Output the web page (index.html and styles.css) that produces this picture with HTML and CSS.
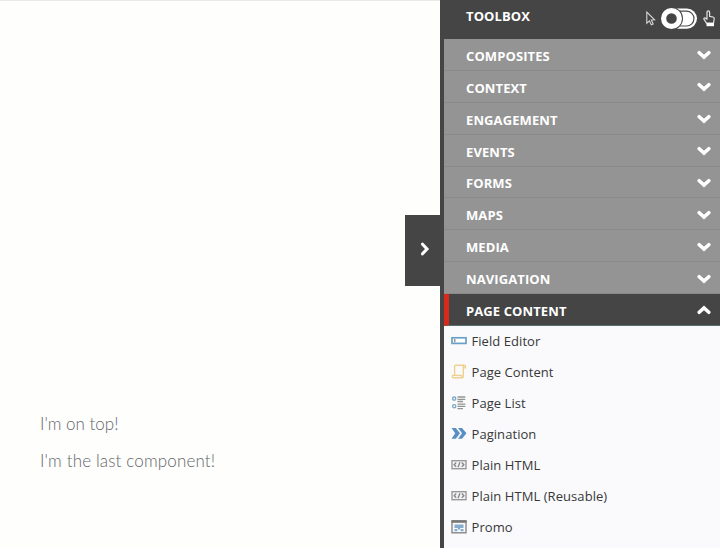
FILE: index.html
```
<!DOCTYPE html>
<html lang="en">
<head>
<meta charset="utf-8">
<title>Toolbox</title>
<link rel="stylesheet" href="styles.css">
</head>
<body>
<svg class="defs" width="0" height="0">
  <symbol id="chevron" viewBox="0 0 14 10"><path d="M2.2 2.7 7 7.1 11.8 2.7" fill="none" stroke="#fff" stroke-width="3.5" stroke-linecap="round" stroke-linejoin="miter"/></symbol>
  <symbol id="code" viewBox="0 0 16 16"><rect x="1" y="3.7" width="14" height="8" fill="#f4f4f4" stroke="#999" stroke-width="1.4"/><path d="M5.2 5.6 3.2 7.7l2 2.1M10.8 5.6l2 2.1-2 2.1M8.9 5.3 7.1 10.2" fill="none" stroke="#888" stroke-width="1.4"/></symbol>
</svg>
<main class="page">
  <p>I'm on top!</p>
  <p class="last">I'm the last component!</p>
  <button class="handle" aria-label="Toggle"><svg width="10" height="14" viewBox="0 0 10 14"><path d="M2.5 2.2 7 7 2.5 11.8" fill="none" stroke="#fff" stroke-width="3.1" stroke-linecap="round"/></svg></button>
</main>
<aside class="toolbox">
  <header class="head">
    <h1>TOOLBOX</h1>
    <svg class="mode" width="72" height="24" viewBox="645 6 72 24">
      <path d="M646.8 12v11.2l2.6-2.4 1.9 4 1.9-.9-1.9-3.9 3.3-.2z" fill="#454545" stroke="#d6d6d6" stroke-width="1.1"/>
      <rect x="662" y="8.4" width="35" height="20.4" rx="10.2" fill="#fff"/>
      <path d="M680 11.2h6.6a7.4 7.4 0 0 1 0 14.8H680" fill="#fff" stroke="#4b4b4b" stroke-width="1.2"/>
      <circle cx="671.5" cy="18.5" r="11.5" fill="#454545"/>
      <circle cx="671.5" cy="18.5" r="7.9" fill="#454545" stroke="#fff" stroke-width="5.2"/>
      <path d="M706.5 23.2 703.9 19.2q-.3-1.6 1.3-1.3l1.8 1.3V12.3q.1-1.4 1.3-1.4t1.3 1.4v4l3.4.7q1.5.5 1.2 2l-.7 4.2z" fill="#454545" stroke="#e4e4e4" stroke-width="1.2" stroke-linejoin="round"/>
      <rect x="706.5" y="23" width="7.5" height="3.2" fill="#fff"/>
    </svg>
  </header>
  <nav>
    <div class="group">COMPOSITES<svg><use href="#chevron"/></svg></div>
    <div class="group">CONTEXT<svg><use href="#chevron"/></svg></div>
    <div class="group">ENGAGEMENT<svg><use href="#chevron"/></svg></div>
    <div class="group">EVENTS<svg><use href="#chevron"/></svg></div>
    <div class="group">FORMS<svg><use href="#chevron"/></svg></div>
    <div class="group">MAPS<svg><use href="#chevron"/></svg></div>
    <div class="group">MEDIA<svg><use href="#chevron"/></svg></div>
    <div class="group">NAVIGATION<svg><use href="#chevron"/></svg></div>
    <div class="group open">PAGE CONTENT<svg><use href="#chevron"/></svg></div>
  </nav>
  <ul class="items">
    <li><svg viewBox="0 0 16 16"><rect x="1" y="4.8" width="14" height="5.6" fill="#fff" stroke="#6a9fc6" stroke-width="1.7"/><path d="M3.8 6v3.3" stroke="#888" stroke-width="1.3"/></svg>Field Editor</li>
    <li><svg viewBox="0 0 16 16"><path d="M3.6 11.5V2.2q0-1 1-1h8.6q1.3 0 1.3 1.3v1.3h-2.2M12.3 2v9.8M1.2 11.4h9.2v1.3q0 1.1 1 1.1h-8.600q-1.600 0-1.600-2.400M11.400 13.800q1 0 1-2" fill="none" stroke="#efd08d" stroke-width="1.4"/></svg>Page Content</li>
    <li><svg viewBox="0 0 16 16"><g fill="none" stroke="#7fa9c7" stroke-width="1.4"><circle cx="3.2" cy="3.6" r="1.6"/><circle cx="3.2" cy="11.2" r="1.6"/></g><path d="M6.500 2h7.800M6.500 4.300h7.800M6.500 6.500h5.500M6.500 9.200h7.800M6.500 11.400h7.800M6.500 13.600h5.500" stroke="#949494" stroke-width="1.300"/></svg>Page List</li>
    <li><svg viewBox="0 0 16 16"><path d="M.5 2h4.3L9 7.3l-4.2 5.500H.5L4.200 7.300zM7 2h4l4.500 5.300L11 12.800H7l4-5.500z" fill="#5b8fc3"/></svg>Pagination</li>
    <li><svg><use href="#code"/></svg>Plain HTML</li>
    <li><svg><use href="#code"/></svg>Plain HTML (Reusable)</li>
    <li><svg viewBox="0 0 16 16"><rect x="1" y="2" width="14" height="11.800" fill="#f7f9fb" stroke="#888" stroke-width="1.400"/><path d="M.5 2.500h15" stroke="#777" stroke-width="2.600"/><path d="M3.500 5.500h9v3.400h-9zM3.500 10h2.800v2.300H3.500zM9.700 10h2.800v2.300H9.700zM6.800 8.500h2.400v2H6.800z" fill="#85acce"/></svg>Promo</li>
  </ul>
</aside>
</body>
</html>
```
FILE: styles.css
```
* { box-sizing: border-box; }
body { margin: 0; height: 548px; display: flex; overflow: hidden; background: #fefefd; font-family: "Open Sans", sans-serif; }
.defs { position: absolute; }
.page { position: relative; width: 440px; padding: 410px 0 0 40px; border-top: 1px solid #e9e9e9; color: #63666a; font-family: Lato, sans-serif; font-weight: 300; font-size: 17px; }
.page p { margin: 0 0 11px; line-height: 26px; }
.page .last { letter-spacing: .15px; }
.handle { position: absolute; right: 0; top: 214px; width: 35px; height: 71px; padding: 0; border: 0; background: #454545; display: flex; align-items: center; justify-content: center; }
.handle svg { margin: -4px 0 0 4px; }
.toolbox { width: 280px; height: 548px; border-left: 4px solid #454545; background: #fafafd; }
.head { height: 39px; padding: 6px 3px 0 22px; display: flex; justify-content: space-between; background: #454545; }
.head h1 { margin: 0; font-size: 13px; line-height: 21px; letter-spacing: .1px; color: #fff; }
.group { height: 31.875px; padding: 3px 9px 0 22px; display: flex; align-items: center; justify-content: space-between; background: #949494; border-bottom: 1px solid #8a8a8a; color: #fff; font-size: 13px; font-weight: 700; letter-spacing: .1px; }
.group svg { width: 14px; height: 10px; margin-top: -1px; }
.group.open { background: #454545; border-left: 5px solid #d9291c; border-bottom-color: #567069; padding-left: 17px; }
.open svg { transform: rotate(180deg); }
.items { list-style: none; margin: 0; padding: 0; }
.items li { height: 31px; padding-left: 6.500px; display: flex; align-items: center; gap: 5px; color: #383838; font-size: 13px; letter-spacing: .06px; }
.items svg { width: 16px; height: 16px; }
```
